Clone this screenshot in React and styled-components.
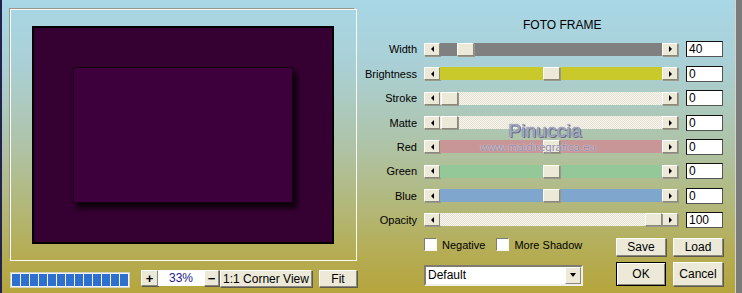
import React from "react";
import styled, { createGlobalStyle, css } from "styled-components";

const Global = createGlobalStyle`
  html, body { margin: 0; padding: 0; }
  body {
    width: 742px; height: 293px; overflow: hidden;
    font-family: "Liberation Sans", Arial, sans-serif;
  }
`;

const Window = styled.div`
  position: relative;
  width: 742px;
  height: 293px;
  box-sizing: border-box;
  display: flex;
  border-left: 2px solid #23214f;
  background: linear-gradient(180deg, #a8d7e6 0%, #aad0d6 22%, #aec4aa 48%, #b2b97f 68%, #b5ad55 86%, #b5a53c 100%);
  font-size: 11px;
  color: #000;
`;

const LeftColumn = styled.div`
  width: 355px;
  padding-left: 8px;
  box-sizing: border-box;
  display: flex;
  flex-direction: column;
`;

const PreviewFrame = styled.div`
  margin-top: 9px;
  width: 347px;
  height: 252px;
  box-sizing: border-box;
  border: 1px solid #fbfbf4;
  box-shadow: -2px -2px 0 -1px #99978a;
  padding: 16px 0 0 21px;
  display: flex;
  align-items: flex-start;
`;

const OuterMat = styled.div`
  width: 302px;
  height: 218px;
  box-sizing: border-box;
  border: 2px solid #000;
  background: #350032;
  display: flex;
  align-items: center;
  justify-content: center;
`;

const InnerPhoto = styled.div`
  width: 220px;
  height: 136px;
  box-sizing: border-box;
  border: 1px solid #14000f;
  background: #3e003c;
  box-shadow: 4px 5px 5px rgba(0, 0, 0, 0.8);
`;

const Toolbar = styled.div`
  margin-top: 9px;
  height: 17px;
  display: flex;
  align-items: flex-end;
`;

const Progress = styled.div`
  width: 120px;
  height: 16px;
  box-sizing: border-box;
  background: #f4f4f4;
  border: 1px solid #d6d2c2;
  padding: 1px;
  display: flex;
  gap: 1px;
  margin-bottom: -1px;
`;

const Segment = styled.div`
  flex: 1;
  background: #2f6fce;
`;

const btnBase = css`
  box-sizing: border-box;
  background: #ece9d8;
  border: 1px solid;
  border-color: #ffffff #8a887a #8a887a #ffffff;
  box-shadow: 1px 1px 0 #5c5a50;
  display: flex;
  align-items: center;
  justify-content: center;
  font-family: "Liberation Sans", Arial, sans-serif;
  color: #000;
  padding: 0;
  white-space: nowrap;
`;

const SmallBtn = styled.div`
  ${btnBase}
  width: ${(p) => p.$w}px;
  height: ${(p) => p.$h || 16}px;
  margin-left: ${(p) => p.$ml || 0}px;
  font-size: ${(p) => p.$fs || 12}px;
  font-weight: ${(p) => (p.$bold ? 700 : 400)};
  align-self: ${(p) => p.$self || "auto"};
`;

const ZoomField = styled.div`
  width: 46px;
  height: 16px;
  background: #fff;
  color: #1a1a8a;
  font-size: 12px;
  display: flex;
  align-items: center;
  justify-content: center;
  align-self: flex-start;
`;

const RightPanel = styled.div`
  flex: 1;
  display: flex;
  flex-direction: column;
  padding-top: 18px;
  position: relative;
`;

const Title = styled.div`
  margin-left: 166px;
  height: 14px;
  line-height: 14px;
  font-size: 12px;
`;

const Rows = styled.div`
  margin-top: 5.3px;
  display: flex;
  flex-direction: column;
`;

const Row = styled.div`
  height: 24.36px;
  display: grid;
  grid-template-columns: 67px 262px 37px;
  align-items: center;
`;

const Label = styled.div`
  text-align: right;
  padding-right: 7px;
  font-size: 11px;
  white-space: nowrap;
`;

const ScrollBar = styled.div`
  width: 254px;
  height: 13px;
  display: flex;
`;

const ArrowBtn = styled.div`
  ${btnBase}
  box-shadow: 1px 1px 0 #9a988a;
  width: 16px;
  height: 13px;
  &::after {
    content: "";
    width: 0;
    height: 0;
    border-top: 3px solid transparent;
    border-bottom: 3px solid transparent;
    ${(p) =>
      p.$dir === "left"
        ? "border-right: 3px solid #000;"
        : "border-left: 3px solid #000;"}
  }
`;

const Track = styled.div`
  flex: 1;
  position: relative;
  ${(p) =>
    p.$hatch
      ? css`
          background: repeating-conic-gradient(#f7f5ee 0 25%, #e5e1d3 0 50%) 0 0 / 2px 2px;
        `
      : css`
          background: ${p.$color};
        `}
`;

const Thumb = styled.div`
  ${btnBase}
  box-shadow: 1px 1px 0 #9a988a;
  position: absolute;
  top: 0;
  width: 17px;
  height: 13px;
`;

const ValueBox = styled.div`
  width: 37px;
  height: 16px;
  box-sizing: border-box;
  background: #fff;
  border: 1px solid;
  border-color: #111 #555 #555 #111;
  font-size: 12px;
  line-height: 14px;
  padding-left: 2px;
`;

const Bottom = styled.div`
  margin-top: 5.8px;
  padding-left: 67px;
  display: grid;
  grid-template-columns: 185px 50px 50px;
  grid-template-rows: 18px 24px;
  column-gap: 7px;
  row-gap: 6px;
`;

const CheckRow = styled.div`
  display: flex;
  align-items: center;
  height: 14px;
`;

const CheckBox = styled.div`
  width: 13px;
  height: 13px;
  box-sizing: border-box;
  background: #fff;
  border: 1px solid;
  border-color: #7e7c70 #f4f4ee #f4f4ee #7e7c70;
  margin-left: ${(p) => p.$ml || 0}px;
  margin-right: 5px;
`;

const CheckLabel = styled.span`
  font-size: 11px;
`;

const Select = styled.div`
  align-self: end;
  width: 159px;
  height: 21px;
  box-sizing: border-box;
  background: #fff;
  border: 2px solid;
  border-color: #7e7c70 #f0efe8 #f0efe8 #7e7c70;
  display: flex;
  align-items: center;
  justify-content: space-between;
  font-size: 12px;
  padding-left: 2px;
`;

const SelectArrow = styled.div`
  ${btnBase}
  box-shadow: none;
  width: 16px;
  height: 17px;
  &::after {
    content: "";
    border-left: 3.5px solid transparent;
    border-right: 3.5px solid transparent;
    border-top: 4px solid #000;
  }
`;

const DialogBtn = styled.div`
  ${btnBase}
  font-size: 12px;
  height: ${(p) => p.$h}px;
  ${(p) =>
    p.$default &&
    css`
      border: 1px solid #000;
      box-shadow: inset 1px 1px 0 #fff, inset -1px -1px 0 #8a887a;
    `}
`;

const RightEdge = styled.div`
  width: 7px;
  box-sizing: border-box;
  border-left: 1px solid #d6d6c6;
  background: #7b7b7b;
`;

const Watermark = styled.div`
  position: absolute;
  left: 121px;
  top: 122px;
  width: 120px;
  display: flex;
  flex-direction: column;
  align-items: center;
  pointer-events: none;
`;

const WmName = styled.div`
  font-size: 19px;
  line-height: 18px;
  height: 18px;
  margin-left: 14px;
  color: #a4a8c4;
  text-shadow: 0 0 1px #5e5e7a, 1px 1px 0 #6c6c88;
  letter-spacing: 0.2px;
`;

const WmUrl = styled.div`
  margin-top: 2px;
  font-size: 11.5px;
  line-height: 11px;
  color: #8c88a4;
  text-shadow: 0 0 1px #ffffff;
`;

const sliders = [
  { label: "Width", color: "#808080", frac: 0.083, value: "40" },
  { label: "Brightness", color: "#c9c92c", frac: 0.502, value: "0" },
  { label: "Stroke", hatch: true, frac: 0.005, value: "0" },
  { label: "Matte", hatch: true, frac: 0.005, value: "0" },
  { label: "Red", color: "#c99698", frac: 0.502, value: "0" },
  { label: "Green", color: "#94c898", frac: 0.502, value: "0" },
  { label: "Blue", color: "#7fa7cd", frac: 0.502, value: "0" },
  { label: "Opacity", hatch: true, frac: 1, value: "100" },
];

export default function App() {
  return (
    <>
      <Global />
      <Window>
        <LeftColumn>
          <PreviewFrame>
            <OuterMat>
              <InnerPhoto />
            </OuterMat>
          </PreviewFrame>
          <Toolbar>
            <Progress>
              {Array.from({ length: 13 }).map((_, i) => (
                <Segment key={i} />
              ))}
            </Progress>
            <SmallBtn $w={17} $ml={11} $bold $fs={13} $self="flex-start">+</SmallBtn>
            <ZoomField>33%</ZoomField>
            <SmallBtn $w={15} $bold $fs={13} $self="flex-start">−</SmallBtn>
            <SmallBtn $w={92} $h={17} $ml={1}>1:1 Corner View</SmallBtn>
            <SmallBtn $w={38} $h={17} $ml={7}>Fit</SmallBtn>
          </Toolbar>
        </LeftColumn>

        <RightPanel>
          <Title>FOTO FRAME</Title>
          <Rows>
            {sliders.map((s) => (
              <Row key={s.label}>
                <Label>{s.label}</Label>
                <ScrollBar>
                  <ArrowBtn $dir="left" />
                  <Track $color={s.color} $hatch={s.hatch}>
                    <Thumb style={{ left: `${Math.round(s.frac * 205)}px` }} />
                  </Track>
                  <ArrowBtn $dir="right" />
                </ScrollBar>
                <ValueBox>{s.value}</ValueBox>
              </Row>
            ))}
          </Rows>
          <Bottom>
            <CheckRow>
              <CheckBox />
              <CheckLabel>Negative</CheckLabel>
              <CheckBox $ml={11} />
              <CheckLabel>More Shadow</CheckLabel>
            </CheckRow>
            <DialogBtn $h={18}>Save</DialogBtn>
            <DialogBtn $h={18}>Load</DialogBtn>
            <Select>
              <span>Default</span>
              <SelectArrow />
            </Select>
            <DialogBtn $h={24} $default>OK</DialogBtn>
            <DialogBtn $h={24}>Cancel</DialogBtn>
          </Bottom>
          <Watermark>
            <WmName>Pinuccia</WmName>
            <WmUrl>www.maidiregrafica.eu</WmUrl>
          </Watermark>
        </RightPanel>
        <RightEdge />
      </Window>
    </>
  );
}
